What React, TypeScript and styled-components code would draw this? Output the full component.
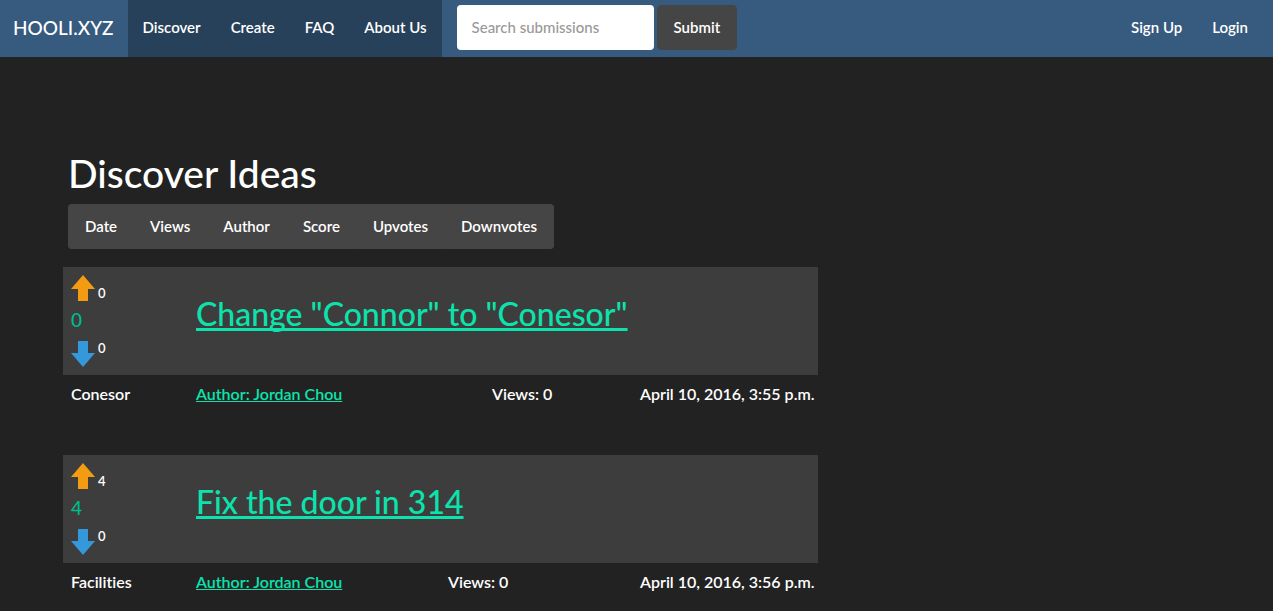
import React from "react";
import styled, { createGlobalStyle } from "styled-components";

const GlobalStyle = createGlobalStyle`
  *, *::before, *::after { box-sizing: border-box; }
  body {
    margin: 0;
    background: #222222;
    color: #ffffff;
    font-family: Lato, "Liberation Sans", sans-serif;
    font-size: 15px;
    font-weight: 500;
    font-variant-ligatures: none;
    line-height: 21px;
  }
`;

const Navbar = styled.nav`
  display: flex;
  min-height: 57px;
  background: #375a7f;
`;

const Brand = styled.a`
  display: flex;
  align-items: center;
  padding: 0 14px 2px 13px;
  color: #ffffff;
  font-size: 19px;
  text-decoration: none;
`;

const NavLinks = styled.div<{ $active?: boolean }>`
  display: flex;
  background: ${(p) => (p.$active ? "#28415b" : "transparent")};
  margin-left: ${(p) => (p.$active ? "0" : "auto")};
  padding-right: ${(p) => (p.$active ? "0" : "10px")};
`;

const NavLink = styled.a`
  display: flex;
  align-items: center;
  padding: 0 15px 2px;
  color: #ffffff;
  font-size: 15px;
  font-weight: 600;
  text-decoration: none;
`;

const SearchForm = styled.form`
  display: flex;
  align-items: flex-start;
  gap: 3px;
  padding: 5px 15px;
`;

const SearchInput = styled.input`
  width: 197px;
  height: 45px;
  padding: 0 15px 1px;
  border: 0;
  border-radius: 4px;
  background: #ffffff;
  color: #464545;
  font: inherit;
  &::placeholder { color: #999999; opacity: 1; }
`;

const Button = styled.button`
  height: 45px;
  padding: 0 16px;
  border: 1px solid #464545;
  border-radius: 4px;
  background: #464545;
  color: #ffffff;
  font: inherit;
  font-weight: 600;
  cursor: pointer;
`;

const Page = styled.main`
  max-width: 823px;
  padding: 95px 5px 0 63px;
`;

const Heading = styled.h1`
  margin: 0 0 9px 5px;
  font-size: 39px;
  line-height: 43px;
  font-weight: 500;
`;

const SortBar = styled.div`
  display: inline-flex;
  margin: 0 0 18px 5px;
  border-radius: 4px;
  background: #464545;
`;

const SortButton = styled(Button)`
  & + & { margin-left: -1px; }
`;

const IdeaList = styled.div`
  display: flex;
  flex-direction: column;
  gap: 42px;
`;

const IdeaTable = styled.table`
  width: 100%;
  border-collapse: collapse;
  table-layout: fixed;
`;

const Column = styled.col<{ $width?: number }>`
  width: ${(p) => (p.$width ? `${p.$width}px` : "auto")};
`;

const TitleRow = styled.tr`
  height: 108px;
  background: #3d3d3d;
`;

const Cell = styled.td`
  padding: 8px;
  vertical-align: top;
`;

const TitleCell = styled(Cell)`
  padding-bottom: 22px;
  vertical-align: middle;
`;

const MetaCell = styled(Cell)`
  height: 38px;
  font-size: 16px;
  font-weight: 600;
  white-space: nowrap;
`;

const Title = styled.h2`
  margin: 0;
  font-size: 32px;
  line-height: 36px;
  font-weight: 500;
`;

const IdeaLink = styled.a`
  color: #0ce3ac;
  text-decoration: underline;
  text-decoration-skip-ink: none;
`;

const Votes = styled.div`
  display: flex;
  flex-direction: column;
`;

const VoteLine = styled.div<{ $down?: boolean }>`
  display: flex;
  align-items: ${(p) => (p.$down ? "flex-start" : "flex-end")};
  gap: 3px;
  height: 26px;
`;

const VoteButton = styled.button`
  display: block;
  padding: 0;
  border: 0;
  background: transparent;
  cursor: pointer;
`;

const Arrow = styled.svg`
  display: block;
`;

const VoteCount = styled.span`
  font-size: 13px;
  font-weight: 600;
  line-height: 15px;
`;

const Score = styled.span`
  padding: 8px 0 10px;
  color: #00bc8c;
  font-size: 19px;
  line-height: 22px;
`;

type Idea = {
  title: string;
  category: string;
  author: string;
  views: number;
  viewsWidth: number;
  date: string;
  up: number;
  down: number;
};

const ideas: Idea[] = [
  { title: 'Change "Connor" to "Conesor"', category: "Conesor", author: "Jordan Chou", views: 0, viewsWidth: 148, date: "April 10, 2016, 3:55 p.m.", up: 0, down: 0 },
  { title: "Fix the door in 314", category: "Facilities", author: "Jordan Chou", views: 0, viewsWidth: 192, date: "April 10, 2016, 3:56 p.m.", up: 4, down: 0 },
];

function IdeaEntry({ idea }: { idea: Idea }) {
  return (
    <IdeaTable>
      <colgroup>
        <Column $width={125} />
        <Column />
        <Column $width={idea.viewsWidth} />
        <Column $width={186} />
      </colgroup>
      <tbody>
        <TitleRow>
          <Cell>
            <Votes>
              <VoteLine>
                <VoteButton aria-label="Upvote">
                  <Arrow width="24" height="26" viewBox="0 0 24 26">
                    <path fill="#f39c12" d="M12 0 24 14H17V26H7V14H0Z" />
                  </Arrow>
                </VoteButton>
                <VoteCount>{idea.up}</VoteCount>
              </VoteLine>
              <Score>{idea.up - idea.down}</Score>
              <VoteLine $down>
                <VoteButton aria-label="Downvote">
                  <Arrow width="24" height="26" viewBox="0 0 24 26">
                    <path fill="#3498db" d="M12 26 24 12H17V0H7V12H0Z" />
                  </Arrow>
                </VoteButton>
                <VoteCount>{idea.down}</VoteCount>
              </VoteLine>
            </Votes>
          </Cell>
          <TitleCell colSpan={3}>
            <Title>
              <IdeaLink href="#">{idea.title}</IdeaLink>
            </Title>
          </TitleCell>
        </TitleRow>
        <tr>
          <MetaCell>{idea.category}</MetaCell>
          <MetaCell>
            <IdeaLink href="#">{`Author: ${idea.author}`}</IdeaLink>
          </MetaCell>
          <MetaCell>{`Views: ${idea.views}`}</MetaCell>
          <MetaCell>{idea.date}</MetaCell>
        </tr>
      </tbody>
    </IdeaTable>
  );
}

const sections = ["Discover", "Create", "FAQ", "About Us"];
const accountLinks = ["Sign Up", "Login"];
const sortKeys = ["Date", "Views", "Author", "Score", "Upvotes", "Downvotes"];

export default function App() {
  return (
    <>
      <GlobalStyle />
      <Navbar>
        <Brand href="#">HOOLI.XYZ</Brand>
        <NavLinks $active>
          {sections.map((name) => (
            <NavLink key={name} href="#">{name}</NavLink>
          ))}
        </NavLinks>
        <SearchForm onSubmit={(e) => e.preventDefault()}>
          <SearchInput type="text" aria-label="Search submissions" placeholder="Search submissions" />
          <Button type="submit">Submit</Button>
        </SearchForm>
        <NavLinks>
          {accountLinks.map((name) => (
            <NavLink key={name} href="#">{name}</NavLink>
          ))}
        </NavLinks>
      </Navbar>
      <Page>
        <Heading>Discover Ideas</Heading>
        <SortBar role="group" aria-label="Sort ideas">
          {sortKeys.map((name) => (
            <SortButton key={name} type="button">{name}</SortButton>
          ))}
        </SortBar>
        <IdeaList>
          {ideas.map((idea) => (
            <IdeaEntry key={idea.title} idea={idea} />
          ))}
        </IdeaList>
      </Page>
    </>
  );
}
